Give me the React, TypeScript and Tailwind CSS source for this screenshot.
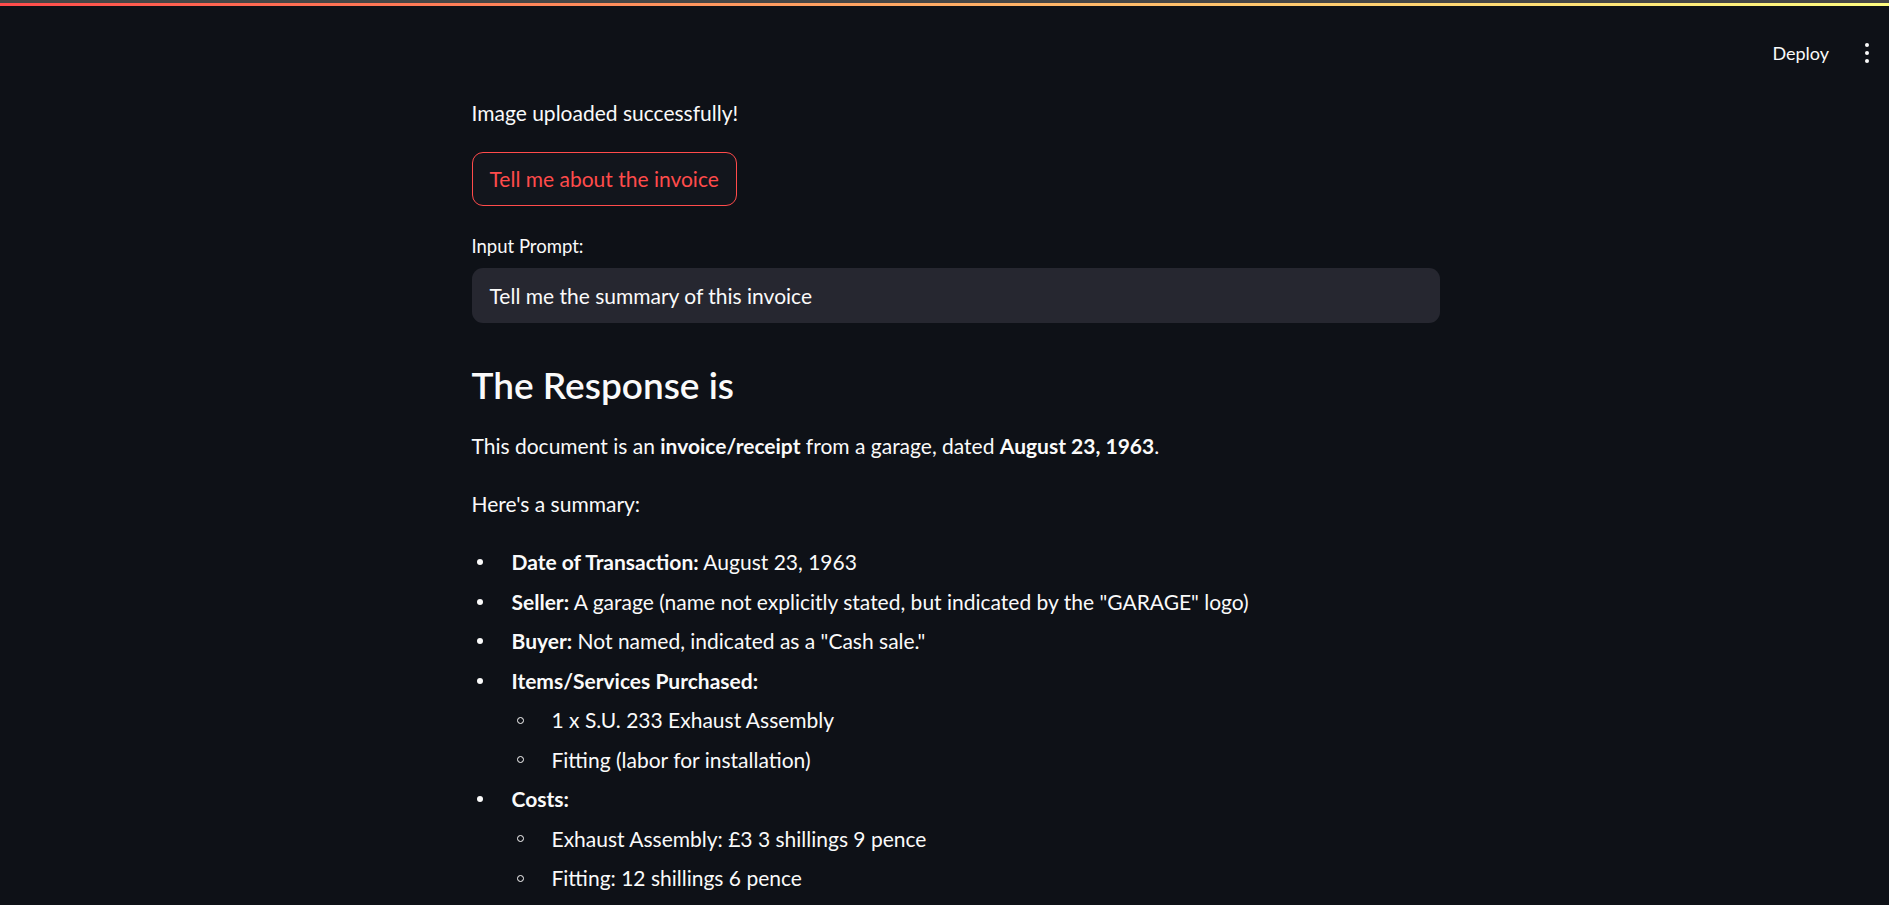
import { ReactNode } from "react";

const FONT = "font-['Lato','Open_Sans',sans-serif]";

type Item = { label?: string; text?: string; children?: string[] };

const SUMMARY: Item[] = [
  { label: "Date of Transaction:", text: " August 23, 1963" },
  { label: "Seller:", text: ' A garage (name not explicitly stated, but indicated by the "GARAGE" logo)' },
  { label: "Buyer:", text: ' Not named, indicated as a "Cash sale."' },
  {
    label: "Items/Services Purchased:",
    children: ["1 x S.U. 233 Exhaust Assembly", "Fitting (labor for installation)"],
  },
  {
    label: "Costs:",
    children: ["Exhaust Assembly: £3 3 shillings 9 pence", "Fitting: 12 shillings 6 pence"],
  },
];

const Row = ({ marker, children }: { marker: "disc" | "circle"; children: ReactNode }) => (
  <li className="flex h-[36px] items-center">
    <span className="flex w-[40px] shrink-0 items-center pl-[5px]">
      {marker === "disc" ? (
        <span className="h-[6px] w-[6px] rounded-full bg-[#fafafa]" />
      ) : (
        <span className="h-[7px] w-[7px] rounded-full border border-[#fafafa]" />
      )}
    </span>
    <span>{children}</span>
  </li>
);

const Header = () => (
  <header className="flex h-[89px] items-start justify-end gap-[34px] pr-[18px] pt-[33px]">
    <button className="h-[28px] text-[18px] leading-[28px] text-[#fafafa]">Deploy</button>
    <span className="flex h-[28px] w-[8px] flex-col items-center justify-center gap-[3.5px]">
      <span className="h-[4.5px] w-[4.5px] rounded-full bg-[#fafafa]" />
      <span className="h-[4.5px] w-[4.5px] rounded-full bg-[#fafafa]" />
      <span className="h-[4.5px] w-[4.5px] rounded-full bg-[#fafafa]" />
    </span>
  </header>
);

export default function App() {
  return (
    <div className={`min-h-[905px] bg-[#0e1117] text-[#fafafa] ${FONT}`}>
      <div className="h-[3px] bg-[#464646]" />
      <div className="h-[3px] bg-gradient-to-r from-[#ff4b4b] to-[#fffd80]" />
      <Header />

      <main className="mx-auto w-[990px] pl-[22px] text-[21px] leading-[36px]">
        <p>Image uploaded successfully!</p>

        <button className="mt-[21px] h-[54px] rounded-[11px] border border-[#ff4b4b] bg-[#12151c] px-[17px] text-[#ff4b4b]">
          Tell me about the invoice
        </button>

        <label className="mt-[26px] block h-[28px] text-[18.5px] leading-[28px]">Input Prompt:</label>
        <div className="mt-[8px] flex h-[55px] items-center rounded-[11px] bg-[#262730] px-[18px]">
          Tell me the summary of this invoice
        </div>

        <h3 className="mt-[38px] text-[37px] font-semibold leading-[47px]">The Response is</h3>

        <p className="mt-[20px]">
          This document is an <strong className="font-bold">invoice/receipt</strong> from a garage, dated{" "}
          <strong className="font-bold">August 23, 1963</strong>.
        </p>
        <p className="mt-[22px]">Here's a summary:</p>

        <ul className="mt-[22px] flex flex-col gap-[3.5px]">
          {SUMMARY.map((item) => (
            <div key={item.label} className="flex flex-col gap-[3.5px]">
              <Row marker="disc">
                <strong className="font-bold">{item.label}</strong>
                {item.text}
              </Row>
              {item.children && (
                <ul className="flex flex-col gap-[3.5px] pl-[40px]">
                  {item.children.map((c) => (
                    <Row key={c} marker="circle">
                      {c}
                    </Row>
                  ))}
                </ul>
              )}
            </div>
          ))}
        </ul>
      </main>
    </div>
  );
}
